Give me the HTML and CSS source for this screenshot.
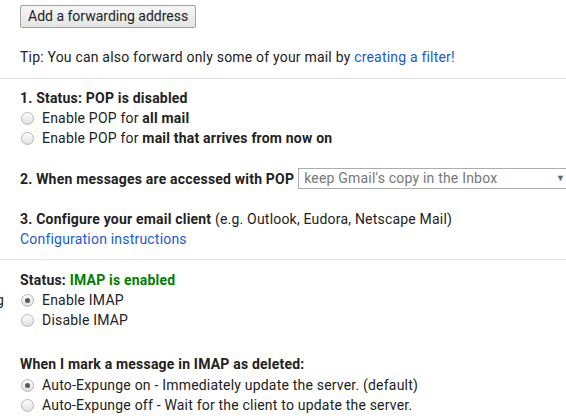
FILE: index.html
```html
<!DOCTYPE html>
<html>
<head>
<meta charset="utf-8">
<link rel="stylesheet" href="styles.css">
</head>
<body>
<div class="page">
  <div class="block fwd">
    <button class="btn" type="button">Add a forwarding address</button>
    <p class="tip">Tip: You can also forward only some of your mail by <a href="#" class="link">creating a filter!</a></p>
  </div>
  <hr class="divider">
  <div class="block pop">
    <div class="line"><b>1. Status: POP is disabled</b></div>
    <label class="opt"><span class="radio"></span><span>Enable POP for <b>all mail</b></span></label>
    <label class="opt"><span class="radio"></span><span>Enable POP for <b>mail that arrives from now on</b></span></label>

    <div class="line sel-line"><b>2. When messages are accessed with POP</b>
      <div class="select"><span class="sel-text">keep Gmail's copy in the Inbox</span><span class="sel-arrow">▼</span></div>
    </div>

    <div class="line cfg"><b>3. Configure your email client</b> (e.g. Outlook, Eudora, Netscape Mail)</div>
    <div class="line"><a href="#" class="link">Configuration instructions</a></div>
  </div>
  <hr class="divider second">
  <div class="block imap">
    <div class="row"><span class="side"></span><div class="line"><b>Status: <span class="ok">IMAP is enabled</span></b></div></div>
    <div class="row"><span class="side"><span>other clients using</span></span><label class="opt"><span class="radio on"></span><span>Enable IMAP</span></label></div>
    <div class="row"><span class="side"></span><label class="opt"><span class="radio"></span><span>Disable IMAP</span></label></div>

    <div class="line del"><b>When I mark a message in IMAP as deleted:</b></div>
    <label class="opt"><span class="radio on"></span><span>Auto-Expunge on - Immediately update the server. (default)</span></label>
    <label class="opt"><span class="radio"></span><span>Auto-Expunge off - Wait for the client to update the server.</span></label>
  </div>
</div>
</body>
</html>
```
FILE: styles.css
```css
html, body {
  margin: 0;
  padding: 0;
  background: #fff;
  overflow: hidden;
}
body {
  font-family: Roboto, "Liberation Sans", Arial, sans-serif;
  font-size: 14px;
  letter-spacing: 0.2px;
  color: #222;
  width: 566px;
  height: 419px;
}
b { font-weight: 700; }
.page {
  display: flex;
  flex-direction: column;
}
.block {
  padding-left: 20px;
  display: flex;
  flex-direction: column;
}
.fwd { padding-top: 5px; }
.btn {
  align-self: flex-start;
  height: 23px;
  padding: 0 7px;
  font-family: Roboto, "Liberation Sans", Arial, sans-serif;
  font-size: 14px;
  letter-spacing: 0;
  color: #222;
  background: linear-gradient(#f6f6f6, #e4e4e4);
  border: 1px solid #a3a3a3;
  border-radius: 2px;
  line-height: 21px;
}
.tip {
  margin: 19px 0 0;
  line-height: 20px;
}
.link {
  color: #1a5bd1;
  text-decoration: none;
}
.divider {
  border: 0;
  border-top: 1px solid #e2e2e2;
  margin: 11px 0 0;
  height: 0;
}
.divider.second { margin-top: 10px; }
.pop { padding-top: 9px; }
.line {
  line-height: 20px;
  white-space: nowrap;
}
.opt {
  display: flex;
  align-items: center;
  gap: 8px;
  line-height: 20px;
  white-space: nowrap;
}
.radio {
  width: 11px;
  height: 11px;
  border-radius: 50%;
  border: 1px solid #b8b8b8;
  background: linear-gradient(#fdfdfd, #e0e0e0);
  position: relative;
  flex: none;
  margin-left: 1px;
}
.radio.on::after {
  content: "";
  position: absolute;
  left: 3px;
  top: 3px;
  width: 5px;
  height: 5px;
  border-radius: 50%;
  background: #5a5a5a;
}
.sel-line {
  display: flex;
  align-items: center;
  gap: 4px;
  margin-top: 20px;
  height: 21px;
}
.select {
  flex: none;
  box-sizing: border-box;
  width: 282px;
  height: 21px;
  border: 1px solid #adadad;
  display: flex;
  align-items: center;
  justify-content: space-between;
  padding: 0 14px 0 5px;
  color: #777;
  line-height: 19px;
}
.sel-arrow {
  font-size: 9px;
  color: #666;
}
.cfg { margin-top: 20px; }
.imap { padding-top: 10px; }
.row {
  display: flex;
  margin-left: -20px;
}
.side {
  width: 4px;
  margin-right: 16px;
  display: flex;
  justify-content: flex-end;
  white-space: nowrap;
  line-height: 20px;
  flex: none;
}
.ok { color: #008000; }
.del { margin-top: 24px; }
.del + .opt { margin-top: 1px; }
```
